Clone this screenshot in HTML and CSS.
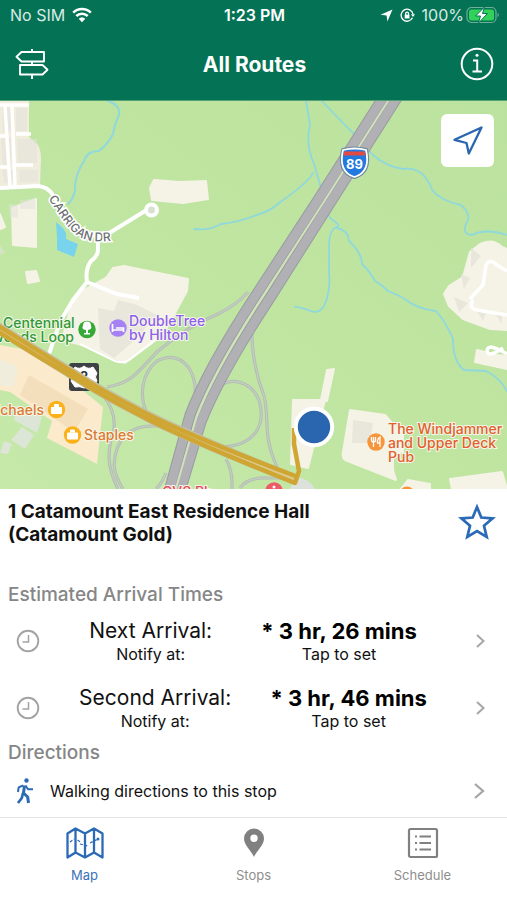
FILE: index.html
```html
<!DOCTYPE html>
<html lang="en">
<head>
<meta charset="utf-8">
<meta name="viewport" content="width=device-width, initial-scale=1">
<title>All Routes</title>
<link rel="stylesheet" href="styles.css">
</head>
<body>
<header class="top">
  <div class="status">
    <div class="status-side">
      <span>No SIM</span>
      <svg width="20" height="16" viewBox="0 0 20 16" fill="none" stroke="#fff" stroke-width="2.6"><path d="M1.2 5.6a12.6 12.6 0 0 1 17.6 0M4.3 9a8.2 8.2 0 0 1 11.4 0"/><path d="M10 15.200l-3.300-3.400a4.800 4.800 0 0 1 6.600 0z" fill="#fff" stroke="none"/></svg>
    </div>
    <span class="clock">1:23 PM</span>
    <div class="status-side status-right">
      <svg width="13" height="13" viewBox="0 0 13 13" fill="#fff"><path d="M12.500.5L7.400 12.500 6.600 6.400.5 5.800z"/></svg>
      <svg width="15" height="15" viewBox="0 0 15 15" fill="none" stroke="#fff" stroke-width="1.300"><path d="M12.500 9.800A6 6 0 1 1 13 6.200"/><path d="M11 6.200h4l-2 2.800z" fill="#fff" stroke="none"/><rect x="4.700" y="6.700" width="4.800" height="3.800" fill="#fff" stroke="none"/><path d="M5.700 7V5.600a1.400 1.400 0 0 1 2.800 0V7"/></svg>
      <span class="battery">100%
      <svg width="33" height="18" viewBox="0 0 33 18"><rect x="1" y="1.500" width="29" height="15" rx="4.500" fill="none" stroke="#6fae98" stroke-width="1.200"/><rect x="3" y="3.500" width="25" height="11" rx="2.500" fill="#32d158"/><path d="M31.500 7v4q1.300-.6 1.300-2t-1.300-2z" fill="#6fae98"/><path d="M18.500 1L9.500 10h5l-2 7 9-9.500h-5z" fill="#fff" stroke="#047857" stroke-width="1"/></svg></span>
    </div>
  </div>
  <nav class="navbar">
    <button class="icon-btn" aria-label="Routes">
      <svg width="34" height="32" viewBox="0 0 34 32" fill="none" stroke="#fff" stroke-width="1.900" stroke-linejoin="round"><path d="M17 1v3M17 13v4M17 26v5M6.500 4H29v9.500H6.500L1.500 8.700zM5 17h22.500l5 4.700-5 4.800H5z"/></svg>
    </button>
    <h1>All Routes</h1>
    <button class="icon-btn" aria-label="Information">
      <svg width="34" height="34" viewBox="0 0 34 34" fill="none" stroke="#fff" stroke-width="2"><circle cx="17" cy="17" r="15.300"/><path d="M13 13.500h4.200V24M12.500 24.500h9.500"/><circle cx="17" cy="8.300" r="1.500" fill="#fff" stroke="none"/></svg>
    </button>
  </nav>
</header>

<main class="content">
<section class="map" aria-label="Route map">
  <svg class="map-art" viewBox="0 100 507 389" preserveAspectRatio="xMidYMid slice">
    <defs>
      <linearGradient id="land" x1="0" y1="1" x2="1" y2="0"><stop offset="0" stop-color="#c6e9aa"/><stop offset=".5" stop-color="#bfe5a1"/><stop offset="1" stop-color="#bce29f"/></linearGradient>
      <path id="carrigan" d="M48 199C60 213 65 228 80 237Q92 244 116 240"/>
      <path id="ramps" d="M248 292q-10 12-30 22-30 12-60 37c-20 20-25 32-51 36M148 416C138 395 142 373 157 361q19-10 32 7 9 15 5 34M252 328c-1 24 5 50 12 68 6 25-2 38 13 71M218 388c12-12 33-7 41 12 8 27-6 46-38 47M102 394q14 16 12 35c-8 24-6 40 4 60M158 426c-30-2-43 14-44 40q2 12 9 23M226 459q7 12 6 30M240 488q8-11 28-10h22M156 489q6-6 10-16"/>
    </defs>
    <rect y="100" width="507" height="389" fill="url(#land)"/>
    <path d="M0 100h29v37l9 8q3 6 3 14l-1 26-40 3z" fill="#f0eddd"/>
    <g fill="#f5f2e6" stroke="#f5f2e6" stroke-width="2" stroke-linejoin="round">
      <path d="M154 180l26 2 26-1 2 18-25 4-31-3-2-12z"/>
      <path d="M12 208l24-9v48l-23-2zM26 272l10-1 3 10-11 2zM0 214l5 13-5 2z"/>
      <path d="M82 291L106 278 113 268 124 266 188 279 187 291 163 335 125 363 90 347 62 340 72 302z"/>
      <path d="M293 400h32l-17 68-17-4zM327 370l7-1-7 32-6-1z"/>
      <path d="M350 410l35 5 8 9v46l3 10-51-20q-3-2-2-8zM385 424l18 4v24h-18zM450 479l52-7 5 17h-55zM408 480l22 4v6h-30z"/>
      <path d="M480 244q13-6 22 3l5 2v81l-17-1-27-10-14-13-5-12 5-8 14-9 7-25zM477 350l20 5 10 1v13l-32-7z"/>
    </g>
    <g fill="#e9e6dc"><path d="M98 308l16 3 4-11 19 5 20 10-21 24-22 19-14-9zM353 420l20 3-3 20h-18zM471 248l10 8-10 12zM461 274l9 4-6 11zM454 297l14 6-9 9zM475 308l11 5-3 8zM494 312l8 1v11z"/></g>
    <g fill="#e3e1da"><path d="M9 204l9 1v13l-8-1zM20 200l15-1v10H20zM0 245l5 8-5 2zM2 107h9v25H3zM1 138h10v28H3zM2 170h11v13H4zM16 108h11v23H16zM17 139h20v24H18zM19 170h19v12H20z" opacity=".55"/></g>
    <path d="M0 345L28 350 64 375 103 407 97 464 47 438 52 421 10 392 0 390z" fill="#fbeacb"/>
    <path d="M29 375l59 34-14 23-54-37z" fill="#f4dfbd"/>
    <path d="M0 359l18 8-5 20-13-2z" fill="#f0eddd"/>
    <path d="M17 405l25 12-5 16-23-13zM22 427l12 8-9 14-14-9zM4 441l8 3-4 10-8-1z" fill="#dde5d7"/>
    <path d="M295 477q14 1 20 12h-25z" fill="#dce1dc"/>

    <g fill="none" stroke="#8fd8dc" stroke-width="1.800" stroke-linecap="round">
      <path d="M108 101q13 4 11 14-4 8-6 19-5 10-14 17-12 0-15 10-10 15-9 30-2 8-7 13" stroke-width="2"/>
      <path d="M194 229q15 2 27-5 18-2 33-8 17-5 25-13 30-21 34-30"/>
      <path d="M306 101l4 24q-5 18 4 39l16 54q12 8 7 9-8 2-8 20v25q2 20-5 34-5 8-13 5-14-5-16-4"/>
      <path d="M322 101q14 15 34 35l17 19q14 12 30 14 14-2 22 8 6 8 7 13 9 11 29 15 9 8 7 15-8 14 4 15 13-7 35 0"/>
      <path d="M337 228q11 2 12 13 13 12 13 23 9 9 13 17 7 4 13 10 13 5 18 9 12 9 30 11 10 11 17 28 0 23 11 31l22 1q14 7 21 20"/>
    </g>
    <path d="M56 222q12 8 10 17l12 5-4 13-17-7v-13z" fill="#78d3ed"/>

    <g fill="none" stroke="#fff" stroke-width="4">
      <path d="M0 105h29M0 136h6M16 134h15M0 167h8M16 165h17M5 106l5 81M12 106l3 80" stroke-width="3.500"/>
      <path d="M0 188l38-2q10 1 15 9C67 215 71 232 92 235q9 2 19-3l34-21M98 237v13q0 6-7 11-6 8-4 21l-14 18-13 22-11 32M87 282l30 12 22 4"/>
      <path d="M80 344l35 17q8 3 14-1l34-26" stroke-width="2"/>
      <circle cx="151.500" cy="210" r="5.500" fill="#d8e0ce"/>
      <path d="M470 299l13-14 3-20q4-7 11 0l10 6M473 300q-5 8 4 10l30 5M507 354q-20-12-20-3 1 7 16-3" stroke-width="3.500"/>
    </g>

    <g fill="none">
      <use href="#ramps" stroke="#b4bdb5" stroke-width="3.200"/>
      <use href="#ramps" stroke="#c3cfbf" stroke-width="1.200"/>
    </g>
    <g fill="none" stroke="#989ba1" stroke-width="11">
      <path d="M388 90L318 200 256 295Q207 370 190 415L168 495"/><path d="M402 90L332 200 270 298Q220 374 201 422L179 495"/>
    </g>
    <g fill="none" stroke="#b0b0b5" stroke-width="9">
      <path d="M388 90L318 200 256 295Q207 370 190 415L168 495"/><path d="M402 90L332 200 270 298Q220 374 201 422L179 495"/>
    </g>
    <path d="M395 90L325 200 263 296Q214 371 196 419L174 495" fill="none" stroke="#d2e0bc" stroke-width="2"/>

    <g class="label tree"><text x="3" y="328">Centennial</text><text x="74" y="342" text-anchor="end">Woods Loop</text></g>
    <g><rect x="69" y="363" width="30" height="28" rx="3" fill="#3d4044"/><path d="M75 367q5 3 9-1 4 4 9 1l4 6q-3 4 0 8l-4 6q-5-1-9 1-4-2-9-1l-4-6q3-4 0-8z" fill="#fff" stroke="#fff" stroke-linejoin="round"/><text x="84" y="381" text-anchor="middle" class="shield-num dark">2</text></g>
    <path d="M-3 327Q35 351 76 376 100 392 153 419 200 442 296 480" fill="none" stroke="#c4c0a0" stroke-width="11"/>
    <path d="M-3 328Q35 352 76 377 100 393 153 420 200 443 296 480" fill="none" stroke="#dcc98e" stroke-width="5"/>
    <path d="M-3 325Q35 349 76 374 100 390 153 417 200 440 298 477M-3 331Q35 355 76 379 100 395 153 422 200 445 295 483L299 471 294 444V428" fill="none" stroke="#cfa633" stroke-width="4.500" stroke-linejoin="round"/>

    <text class="road"><textPath href="#carrigan">CARRIGAN DR</textPath></text>

    <circle cx="87" cy="329.500" r="8.700" fill="#37a936"/>
    <path d="M83 325.500a4 4 0 0 1 8 0q1.500 4-3 4.500v3h2v1.500h-6V333h2v-3q-5-.5-3-4.500z" fill="#fff"/>
    <circle cx="118" cy="328" r="8.700" fill="#a681f4"/>
    <path d="M112.500 324v8M112.500 330h11v2M116 328h7.500v2" fill="none" stroke="#fff" stroke-width="1.700"/>
    <g class="label hotel"><text x="129" y="326">DoubleTree</text><text x="129" y="340">by Hilton</text></g>

    <circle cx="56.500" cy="409.500" r="8.700" fill="#fbb119"/><path d="M51.500 407.500h10v6h-10zM54.500 407v-2.500h4v2.500" fill="#fff" stroke="#fff"/>
    <circle cx="72.500" cy="435" r="8.700" fill="#fbb119"/><path d="M67.500 433h10v6h-10zM70.500 432.500V430h4v2.500" fill="#fff" stroke="#fff"/>
    <g class="label shop"><text x="44" y="415" text-anchor="end">Michaels</text><text x="84" y="440">Staples</text></g>

    <circle cx="376" cy="442" r="8.700" fill="#f7953a"/>
    <path d="M371.500 437v3q0 2 2 2v5M373.500 437v5M375.500 437v3q0 2-2 2M380 447v-10q-3 2-2.500 6h2.500" fill="none" stroke="#fff" stroke-width="1.300"/>
    <g class="label food"><text x="388" y="434">The Windjammer</text><text x="388" y="448">and Upper Deck</text><text x="388" y="462">Pub</text></g>
    <g class="label pharmacy"><text x="162" y="497">CVS Ph</text></g>
    <circle cx="274" cy="491" r="8.700" fill="#ee5967"/><circle cx="274" cy="487" r="1.500" fill="#fff"/>
    <circle cx="407" cy="494" r="7.500" fill="#f7953a"/>

    <path d="M343 150q12-3 23 0 5 22-11.500 27Q338 172 343 150z" fill="#2479df" stroke="#718a9c" stroke-width="4" stroke-linejoin="round"/>
    <path d="M343 150q12-3 23 0 5 22-11.500 27Q338 172 343 150z" fill="#2479df" stroke="#fff" stroke-width="1.800"/>
    <path d="M344 151.500h21l.5 4h-22z" fill="#e24a43"/>
    <text x="354.500" y="169" text-anchor="middle" class="shield-num">89</text>
    <circle cx="314" cy="427" r="18.200" fill="#2a65b0" stroke="#fff" stroke-width="4"/>
    <path d="M0 100.500h507" stroke="#56a173"/>
  </svg>
  <button class="locate" aria-label="My location">
    <svg width="30" height="30" viewBox="0 0 30 30" fill="none" stroke="#2a65b0" stroke-width="2.300" stroke-linejoin="round"><path d="M28.500 1.500L15.800 27.500 13.500 17 1.500 13.800z"/></svg>
  </button>
</section>

<section class="stop">
  <div class="stop-head">
    <h2>1 Catamount East Residence Hall (Catamount Gold)</h2>
    <button class="icon-btn" aria-label="Favorite">
      <svg width="38" height="37" viewBox="0 0 38 37" fill="none" stroke="#2a6ab6" stroke-width="2.700"><path d="M19 4l4.300 10.500 11.400.9-8.700 7.400 2.700 11.100L19 28l-9.700 5.900 2.700-11.100-8.700-7.400 11.400-.9z"/></svg>
    </button>
  </div>
  <h3>Estimated Arrival Times</h3>
  <button class="arrival">
    <svg width="24" height="24" viewBox="0 0 24 24" fill="none" stroke="#a3a3a3" stroke-width="1.900"><circle cx="12" cy="12" r="10.300"/><path d="M12.500 6v7H6.500" stroke-width="1.500"/></svg>
    <span class="pair"><span class="big">Next Arrival:</span><span class="small">Notify at:</span></span>
    <span class="pair"><span class="big strong">* 3 hr, 26 mins</span><span class="small">Tap to set</span></span>
    <svg class="chev" width="22" height="16" viewBox="0 0 22 16" fill="none" stroke="#a6a6a6" stroke-width="2"><path d="M11 2l6.500 6-6.500 6"/></svg>
  </button>
  <button class="arrival">
    <svg width="24" height="24" viewBox="0 0 24 24" fill="none" stroke="#a3a3a3" stroke-width="1.900"><circle cx="12" cy="12" r="10.300"/><path d="M12.500 6v7H6.500" stroke-width="1.500"/></svg>
    <span class="pair"><span class="big">Second Arrival:</span><span class="small">Notify at:</span></span>
    <span class="pair"><span class="big strong">* 3 hr, 46 mins</span><span class="small">Tap to set</span></span>
    <svg class="chev" width="22" height="16" viewBox="0 0 22 16" fill="none" stroke="#a6a6a6" stroke-width="2"><path d="M11 2l6.500 6-6.500 6"/></svg>
  </button>
  <h3>Directions</h3>
  <button class="walk">
    <svg width="18" height="26" viewBox="0 0 18 26" fill="none" stroke="#2a6ab6" stroke-linejoin="round"><circle cx="10.500" cy="2.500" r="2.200" fill="#2a6ab6" stroke="none"/><path d="M8.500 7.500L7.500 15l4.200 4 .8 6" stroke-width="3"/><path d="M7 15l-1.200 5L2 25" stroke-width="2.700"/><path d="M7 7.500l-4.300 1.800L2 14" stroke-width="2"/><path d="M9.500 7.500l2.500 3.800h5" stroke-width="2"/></svg>
    <span>Walking directions to this stop</span>
    <svg class="chev" width="16" height="18" viewBox="0 0 16 18" fill="none" stroke="#a6a6a6" stroke-width="2.300"><path d="M5 2l8 7-8 7"/></svg>
  </button>
</section>
</main>

<nav class="tabs" aria-label="Sections">
  <a href="#map" class="tab active">
    <svg width="38" height="32" viewBox="0 0 38 32" fill="none" stroke="#2a6ab6" stroke-width="2.300" stroke-linejoin="round"><path d="M1.500 6.500l8-5 9.500 5 9-5 8.500 5v24l-8.500-5-9 5-9.500-5-8 5zM9.500 1.500v24M19 6.500v24M28 1.500v24"/><path d="M4 15l4-3M11.500 13l3 2M14 17l8 2M24 16l8-4" stroke-width="1.200" stroke-dasharray="3 1.500"/><circle cx="32" cy="12" r="1.500" fill="#2a6ab6" stroke="none"/></svg>
    <span>Map</span>
  </a>
  <a href="#stops" class="tab">
    <svg width="22" height="32" viewBox="0 0 22 32"><path fill="#808080" fill-rule="evenodd" d="M11 1.500a10 10 0 0 0-10 10C1 18.500 8 23 11 30c3-7 10-11.500 10-18.500a10 10 0 0 0-10-10zM11 7.500a3.700 3.700 0 1 1 0 7.400 3.700 3.700 0 0 1 0-7.400z"/></svg>
    <span>Stops</span>
  </a>
  <a href="#schedule" class="tab">
    <svg width="32" height="32" viewBox="0 0 32 32" fill="none" stroke="#808080" stroke-width="2.200"><rect x="2" y="2" width="28" height="28" rx="1.500"/><path d="M12.500 9.500H24M12.500 16H24M12.500 22.500H24M8 9.500h2M8 16h2M8 22.500h2"/></svg>
    <span>Schedule</span>
  </a>
</nav>
</body>
</html>
```

FILE: styles.css
```css
* {
  box-sizing: border-box;
}

body {
  margin: 0;
  min-height: 100vh;
  display: flex;
  flex-direction: column;
  background: #fff;
  color: #111;
  font-family: Inter, "Liberation Sans", sans-serif;
}

button {
  border: 0;
  padding: 0;
  background: none;
  color: inherit;
  font: inherit;
  cursor: pointer;
}

svg {
  display: block;
  flex: none;
}

h1, h2, h3 {
  margin: 0;
}

.top {
  background: #047355;
  color: #fff;
}

.status {
  display: grid;
  grid-template-columns: 1fr auto 1fr;
  align-items: center;
  height: 30px;
  padding: 0 8px 0 10px;
  font-size: 16px;
}

.status-side {
  display: flex;
  align-items: center;
  gap: 7px;
  color: #d9ebe5;
}

.status-right {
  justify-content: flex-end;
}

.battery {
  display: flex;
  align-items: center;
  gap: 2px;
}

.clock {
  font-weight: 600;
}

.navbar {
  display: flex;
  align-items: center;
  justify-content: space-between;
  height: 70px;
  padding: 0 13px 2px 15px;
}

.navbar h1 {
  font-size: 21px;
  font-weight: 700;
}

.content {
  flex: 1;
  display: flex;
  flex-direction: column;
}

.map {
  position: relative;
  flex: 1;
  min-height: 320px;
}

.map-art {
  position: absolute;
  inset: 0;
  width: 100%;
  height: 100%;
}

.label {
  font-size: 14px;
  font-weight: 500;
  stroke: #f4f6e9;
  stroke-width: 2px;
  paint-order: stroke;
}

.tree { fill: #2f9a35; }
.hotel { fill: #8f5fee; }
.shop { fill: #dd7a30; }
.food { fill: #e2602c; }
.pharmacy { fill: #e5495c; }

.road {
  font-size: 12px;
  font-weight: 500;
  fill: #6b6e70;
  stroke: #fff;
  stroke-width: 3px;
  paint-order: stroke;
}

.shield-num {
  font-size: 13px;
  font-weight: 700;
  fill: #fff;
}

.shield-num.dark {
  fill: #333;
}

.locate {
  position: absolute;
  top: 14px;
  right: 13px;
  display: grid;
  place-items: center;
  width: 53px;
  height: 53px;
  border-radius: 6px;
  background: #fff;
}

.stop {
  padding: 11px 8px 0;
}

.stop-head {
  display: flex;
  align-items: flex-start;
  justify-content: space-between;
  gap: 80px;
  padding-right: 3px;
  min-height: 83px;
}

.stop h2 {
  font-size: 19px;
  line-height: 23px;
  font-weight: 700;
}

.stop-head .icon-btn {
  padding-top: 3px;
}

.stop h3 {
  font-size: 19px;
  line-height: 24px;
  font-weight: 500;
  color: #868686;
}

.arrival,
.walk {
  display: flex;
  align-items: center;
  width: 100%;
  padding: 0 8px;
}

.arrival {
  justify-content: space-between;
  height: 67px;
}

.pair {
  display: flex;
  flex-direction: column;
  align-items: center;
}

.big {
  font-size: 21px;
  line-height: 26px;
}

.strong {
  font-size: 22px;
  font-weight: 700;
  color: #000;
}

.small {
  font-size: 16px;
  line-height: 20px;
}

.walk {
  gap: 16px;
  height: 52px;
  font-size: 16px;
}

.arrival .chev {
  margin-right: 3px;
}

.walk .chev {
  margin: 0 5px 0 auto;
}

.tabs {
  display: grid;
  grid-template-columns: repeat(3, 1fr);
  height: 83px;
  border-top: 1px solid #e2e2e2;
}

.tab {
  display: flex;
  flex-direction: column;
  align-items: center;
  gap: 7px;
  padding-top: 9px;
  color: #8e8e8e;
  font-size: 13px;
  line-height: 18px;
  text-decoration: none;
}

.tab.active {
  color: #3a72b8;
}
```
